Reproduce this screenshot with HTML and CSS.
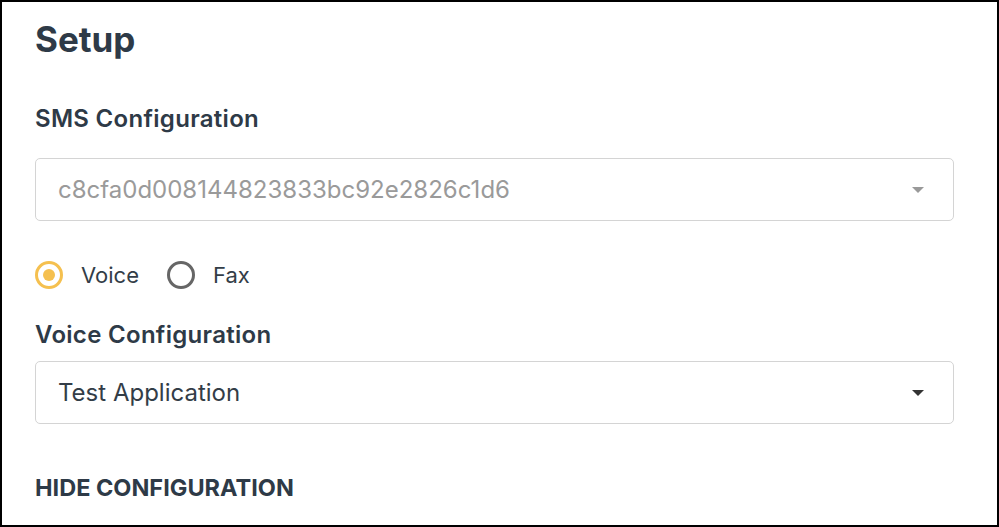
FILE: index.html
```html
<html>

<head lang="en">
    <title>Setup</title>
    <link rel="stylesheet" href="styles.css">
</head>

<body>
    <div class="frame">
        <h1 class="title">Setup</h1>

        <div class="field sms-field">
            <label class="field-label">SMS Configuration</label>
            <div class="select disabled">
                <span class="select-value">c8cfa0d008144823833bc92e2826c1d6</span>
                <span class="caret"></span>
            </div>
        </div>

        <div class="radios">
            <label class="radio checked">
                <span class="radio-dot"></span>
                <span>Voice</span>
            </label>
            <label class="radio">
                <span class="radio-dot"></span>
                <span>Fax</span>
            </label>
        </div>

        <div class="field voice-field">
            <label class="field-label">Voice Configuration</label>
            <div class="select">
                <span class="select-value">Test Application</span>
                <span class="caret"></span>
            </div>
        </div>

        <div class="toggle">HIDE CONFIGURATION</div>
    </div>
</body>

</html>
```

FILE: styles.css
```css
body {
    margin: 0;
    font-family: Inter, "Noto Sans", sans-serif;
    color: #333d47;
}

.frame {
    width: 999px;
    height: 527px;
    box-sizing: border-box;
    border: 2px solid #000;
    padding: 14px 43px 0 33px;
    background-color: #fff;
    overflow: hidden;
}

.title {
    margin: 0;
    font-size: 35px;
    line-height: 46px;
    font-weight: 700;
    color: #2e3a47;
}

.field-label {
    display: block;
    font-size: 24px;
    line-height: 30px;
    font-weight: 600;
    letter-spacing: 0.3px;
    color: #2e3a47;
}

.sms-field {
    margin-top: 42px;
}

.sms-field .field-label {
    margin-bottom: 24px;
}

.voice-field {
    margin-top: 30px;
}

.voice-field .field-label {
    margin-bottom: 11px;
}

.select {
    height: 63px;
    box-sizing: border-box;
    border: 1px solid #d4d4d4;
    border-radius: 5px;
    display: flex;
    align-items: center;
    justify-content: space-between;
    padding: 0 29px 0 22px;
    font-size: 24px;
    color: #333d47;
}

.select.disabled {
    color: #9a9a9a;
}

.caret {
    width: 0;
    height: 0;
    border-left: 6px solid transparent;
    border-right: 6px solid transparent;
    border-top: 6px solid #333;
}

.select.disabled .caret {
    border-top-color: #999;
}

.radios {
    display: flex;
    gap: 28px;
    margin-top: 39px;
}

.radio {
    display: flex;
    align-items: center;
    gap: 18px;
    font-size: 22px;
    line-height: 30px;
    color: #333d47;
}

.radio-dot {
    width: 28px;
    height: 28px;
    box-sizing: border-box;
    border: 3px solid #666;
    border-radius: 50%;
    display: flex;
    align-items: center;
    justify-content: center;
}

.radio.checked .radio-dot {
    border-color: #f5c04f;
}

.radio.checked .radio-dot::after {
    content: "";
    width: 12px;
    height: 12px;
    border-radius: 50%;
    background-color: #f5c04f;
}

.toggle {
    margin-top: 49px;
    font-size: 23.5px;
    line-height: 30px;
    font-weight: 700;
    color: #2e3a47;
}
```
